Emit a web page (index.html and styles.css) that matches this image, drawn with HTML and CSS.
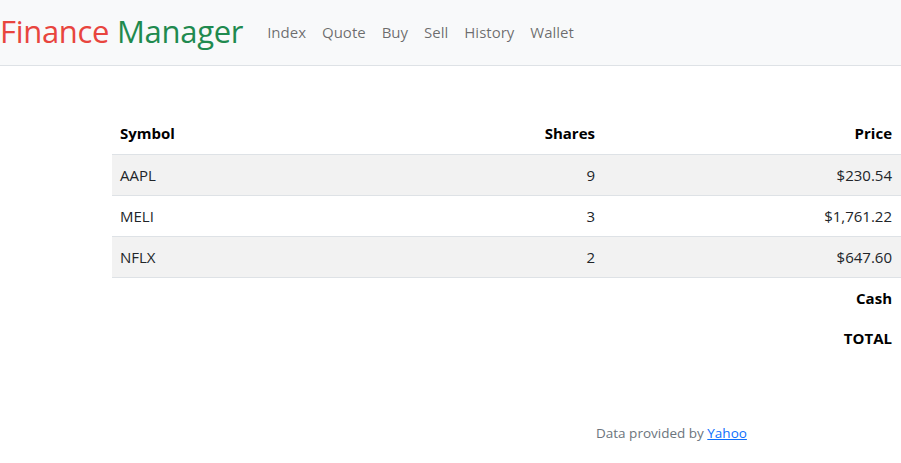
FILE: index.html
```html
<!DOCTYPE html>
<html lang="en">
<head>
<meta charset="utf-8">
<title>Finance Manager: Portfolio</title>
<link rel="stylesheet" href="styles.css">
</head>
<body>
<nav class="navbar">
  <a class="brand" href="#"><span class="red">Finance</span> <span class="green">Manager</span></a>
  <ul class="nav-links">
    <li><a href="#">Index</a></li>
    <li><a href="#">Quote</a></li>
    <li><a href="#">Buy</a></li>
    <li><a href="#">Sell</a></li>
    <li><a href="#">History</a></li>
    <li><a href="#">Wallet</a></li>
  </ul>
</nav>
<main class="main">
  <table class="table">
    <colgroup>
      <col class="c-symbol">
      <col class="c-shares">
      <col class="c-price">
    </colgroup>
    <thead>
      <tr><th class="left">Symbol</th><th class="right">Shares</th><th class="right last">Price</th></tr>
    </thead>
    <tbody>
      <tr class="odd"><td>AAPL</td><td class="right">9</td><td class="right last">$230.54</td></tr>
      <tr><td>MELI</td><td class="right">3</td><td class="right last">$1,761.22</td></tr>
      <tr class="odd"><td>NFLX</td><td class="right">2</td><td class="right last">$647.60</td></tr>
    </tbody>
    <tfoot>
      <tr><td></td><td></td><th class="right last">Cash</th></tr>
      <tr><td></td><td></td><th class="right last">TOTAL</th></tr>
    </tfoot>
  </table>
</main>
<footer class="footer">
  <p>Data provided by <a href="#">Yahoo</a></p>
</footer>
</body>
</html>
```
FILE: styles.css
```css
* { box-sizing: border-box; }
html, body { margin: 0; padding: 0; }
body {
  font-family: "Open Sans", "Noto Sans", sans-serif;
  font-size: 15px;
  line-height: 24px;
  color: #212529;
  background: #fff;
  overflow: hidden;
}
.navbar {
  height: 66px;
  background: #f8f9fa;
  border-bottom: 1px solid #dee2e6;
  display: flex;
  align-items: center;
}
.brand {
  font-size: 31px;
  line-height: 40px;
  text-decoration: none;
  margin-top: -3px;
  letter-spacing: -0.3px;
}
.red { color: #e8453e; }
.green { color: #1f8a4f; }
.nav-links {
  list-style: none;
  display: flex;
  margin: -2px 0 0 16px;
  padding: 0;
}
.nav-links a {
  display: block;
  padding: 8px 8px;
  color: rgba(0,0,0,0.58);
  text-decoration: none;
  font-size: 15px;
}
.main {
  padding: 47px 0 0 112px;
}
.table {
  width: 789px;
  border-collapse: collapse;
}
.c-symbol { width: 300px; }
.c-shares { width: 191px; }
.c-price { width: 298px; }
.table th, .table td {
  padding: 8px;
  height: 41px;
  vertical-align: middle;
  text-align: left;
}
.table th { font-weight: 700; color: #000; }
.table td { color: #212529; }
.table thead tr { border-bottom: 1px solid #dee2e6; }
.table tbody tr { border-bottom: 1px solid #dee2e6; }
.table tbody tr.odd { background: #f2f2f2; }
.table tfoot th, .table tfoot td { height: 40px; }
.table .right { text-align: right; }
.table .last { padding-right: 9px; }
.footer {
  padding: 0 0 0 596px;
  margin-top: 63px;
}
.footer p {
  margin: 0;
  font-size: 13.5px;
  color: #6c757d;
}
.footer a { color: #0d6efd; }
```
